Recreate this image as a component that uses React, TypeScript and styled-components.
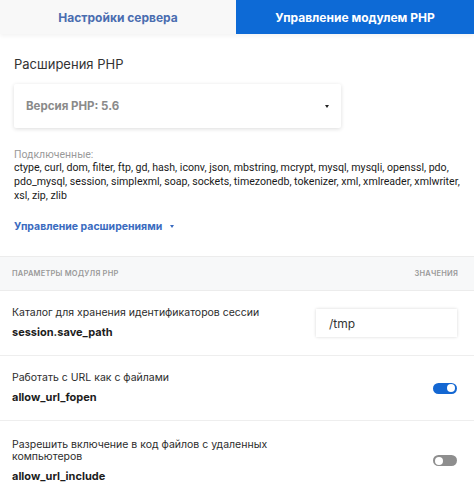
import React from "react";
import styled, { createGlobalStyle } from "styled-components";

const GlobalStyle = createGlobalStyle`
  html, body {
    margin: 0;
    padding: 0;
    background: #ffffff;
    font-family: Inter, "Noto Sans", Arial, sans-serif;
    color: #2b2b2b;
  }
`;

const Page = styled.div`
  width: 474px;
  height: 483px;
  overflow: hidden;
  background: #fff;
`;

const Tabs = styled.div`
  display: grid;
  grid-template-columns: 236px 1fr;
  height: 34px;
  box-shadow: 0 2px 4px rgba(0, 0, 0, 0.05);
`;

const Tab = styled.div<{ $active?: boolean }>`
  display: flex;
  align-items: center;
  justify-content: center;
  font-size: 12px;
  font-weight: 700;
  background: ${({ $active }) => ($active ? "#0d6ad6" : "#f8f8f8")};
  color: ${({ $active }) => ($active ? "#ffffff" : "#4a6db0")};
`;

const Section = styled.div`
  padding: 22px 14px 0;
`;

const SectionTitle = styled.div`
  font-size: 13px;
  color: #333;
  height: 17px;
`;

const Select = styled.div`
  margin-top: 11px;
  width: 327px;
  height: 44px;
  box-sizing: border-box;
  display: flex;
  align-items: center;
  justify-content: space-between;
  padding: 0 12px;
  border-radius: 2px;
  box-shadow: 0 1px 4px rgba(0, 0, 0, 0.14);
  font-size: 11.5px;
  font-weight: 700;
  color: #8a8a8a;
`;

const Caret = styled.span`
  width: 0;
  height: 0;
  border-left: 2.5px solid transparent;
  border-right: 2.5px solid transparent;
  border-top: 3px solid #222;
`;

const Connected = styled.div`
  margin-top: 21px;
  font-family: Roboto, Arial, sans-serif;
  font-size: 10.6px;
  line-height: 14px;
  color: #1a1a1a;
`;

const ConnectedLine = styled.div`
  white-space: nowrap;
`;

const ConnectedLabel = styled.div`
  color: #9a9a9a;
  font-size: 10.5px;
  line-height: 12px;
`;

const ManageLink = styled.div`
  margin-top: 17px;
  display: flex;
  align-items: center;
  gap: 8px;
  font-size: 10.5px;
  font-weight: 700;
  color: #3a6bc0;
`;

const BlueCaret = styled(Caret)`
  border-top-color: #3a6bc0;
`;

const TableHead = styled.div`
  margin-top: 23px;
  height: 35px;
  box-sizing: border-box;
  display: flex;
  align-items: center;
  justify-content: space-between;
  padding: 0 16px 0 12px;
  background: #f7f8f9;
  border-top: 1px solid #ececec;
  border-bottom: 1px solid #ececec;
  font-size: 7.5px;
  font-weight: 600;
  letter-spacing: 0.2px;
  color: #9a9a9a;
  text-transform: uppercase;
`;

const Row = styled.div<{ $height: number }>`
  height: ${({ $height }) => $height}px;
  box-sizing: border-box;
  display: flex;
  align-items: center;
  justify-content: space-between;
  padding: 0 17px 0 12px;
  border-bottom: 1px solid #eeeeee;
`;

const RowText = styled.div`
  max-width: 270px;
`;

const RowLabel = styled.div`
  font-size: 10.5px;
  line-height: 12px;
  color: #2c2c2c;
`;

const RowKey = styled.div`
  margin-top: 6px;
  font-size: 11px;
  font-weight: 700;
  color: #1c1c1c;
`;

const ValueInput = styled.div`
  width: 141px;
  height: 28px;
  box-sizing: border-box;
  display: flex;
  align-items: center;
  padding-left: 13px;
  font-size: 12px;
  color: #333;
  box-shadow: 0 0 3px rgba(0, 0, 0, 0.16);
`;

const Toggle = styled.div<{ $on?: boolean }>`
  position: relative;
  width: 24px;
  height: 11px;
  border-radius: 6px;
  background: ${({ $on }) => ($on ? "#1467d2" : "#8e8e8e")};
  &::after {
    content: "";
    position: absolute;
    top: 1.5px;
    ${({ $on }) => ($on ? "right: 2px;" : "left: 2px;")}
    width: 8px;
    height: 8px;
    border-radius: 50%;
    background: #fff;
  }
`;

const extensionLines = [
  "ctype, curl, dom, filter, ftp, gd, hash, iconv, json, mbstring, mcrypt, mysql, mysqli, openssl, pdo,",
  "pdo_mysql, session, simplexml, soap, sockets, timezonedb, tokenizer, xml, xmlreader, xmlwriter,",
  "xsl, zip, zlib",
];

export default function App() {
  return (
    <Page>
      <GlobalStyle />
      <Tabs>
        <Tab>Настройки сервера</Tab>
        <Tab $active>Управление модулем PHP</Tab>
      </Tabs>
      <Section>
        <SectionTitle>Расширения PHP</SectionTitle>
        <Select>
          Версия PHP: 5.6
          <Caret />
        </Select>
        <Connected>
          <ConnectedLabel>Подключенные:</ConnectedLabel>
          {extensionLines.map((line) => (
            <ConnectedLine key={line}>{line}</ConnectedLine>
          ))}
        </Connected>
        <ManageLink>
          Управление расширениями
          <BlueCaret />
        </ManageLink>
      </Section>
      <TableHead>
        <span>Параметры модуля PHP</span>
        <span>Значения</span>
      </TableHead>
      <Row $height={65}>
        <RowText>
          <RowLabel>Каталог для хранения идентификаторов сессии</RowLabel>
          <RowKey>session.save_path</RowKey>
        </RowText>
        <ValueInput>/tmp</ValueInput>
      </Row>
      <Row $height={65}>
        <RowText>
          <RowLabel>Работать с URL как с файлами</RowLabel>
          <RowKey>allow_url_fopen</RowKey>
        </RowText>
        <Toggle $on />
      </Row>
      <Row $height={80}>
        <RowText>
          <RowLabel>Разрешить включение в код файлов с удаленных компьютеров</RowLabel>
          <RowKey>allow_url_include</RowKey>
        </RowText>
        <Toggle />
      </Row>
    </Page>
  );
}
